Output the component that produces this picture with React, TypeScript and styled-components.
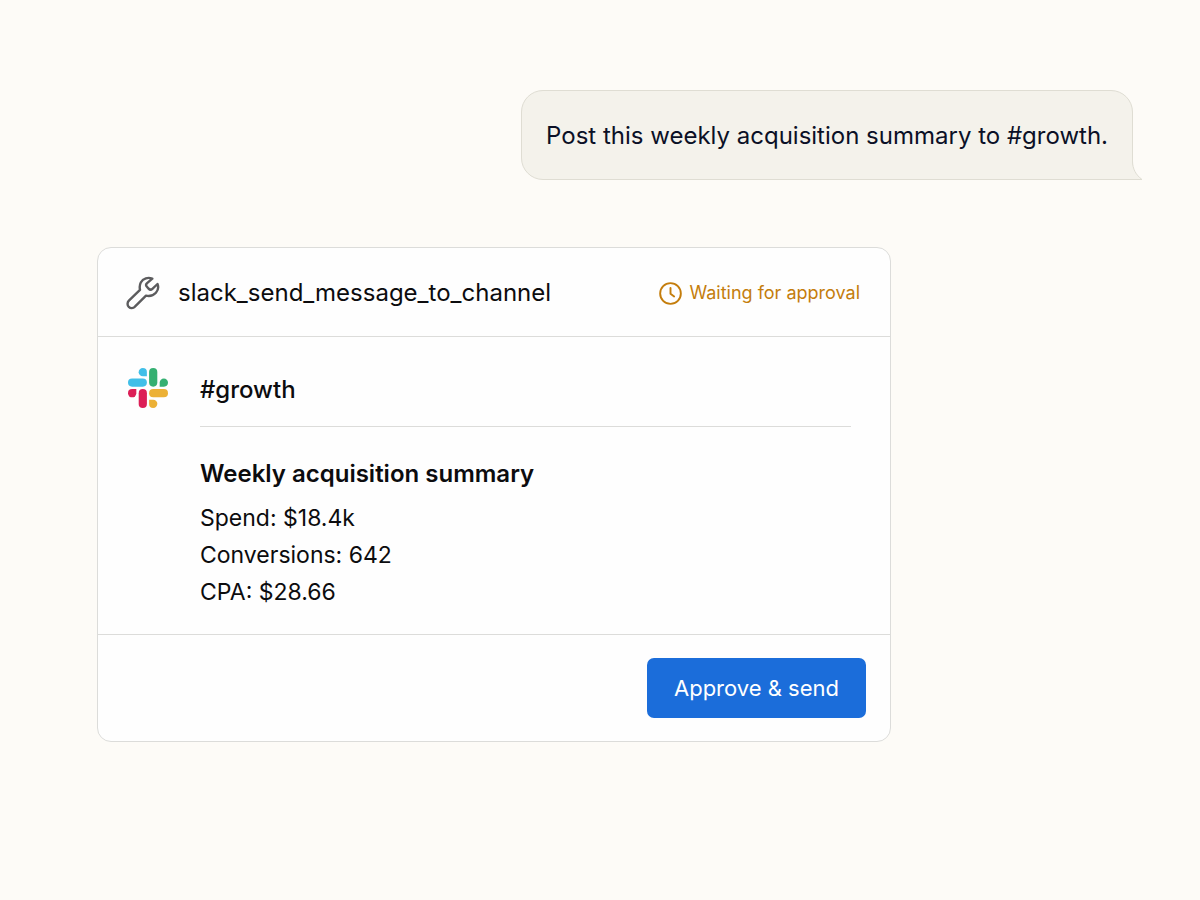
import React from 'react';
import styled, { createGlobalStyle } from 'styled-components';

const GlobalStyle = createGlobalStyle`
  *, *::before, *::after { box-sizing: border-box; }
  body {
    margin: 0;
    background: #fdfbf7;
    color: #0c0c0e;
    font-family: Inter, "Liberation Sans", sans-serif;
    font-size: 24px;
    line-height: 36px;
  }
  h1, h2, p, ul { margin: 0; padding: 0; font-size: inherit; }
`;

const Conversation = styled.main`
  display: flex;
  flex-direction: column;
  gap: 67px;
  min-height: 100vh;
  padding: 90px 67px 90px 97px;
`;

const UserMessage = styled.div`
  position: relative;
  align-self: flex-end;
  padding: 27px 24px 25px;
  border: 1px solid #dfddd3;
  border-radius: 22px 22px 0 22px;
  background: #f4f2eb;
  color: #0b1026;
`;

const BubbleTail = styled.svg`
  position: absolute;
  right: -11px;
  bottom: -1px;
`;

const Card = styled.section`
  width: 100%;
  max-width: 794px;
  border: 1px solid #dcdcda;
  border-radius: 14px;
  background: #fefefe;
`;

const CardHeader = styled.header`
  display: flex;
  align-items: center;
  justify-content: space-between;
  gap: 16px;
  padding: 27px 30px 25px 28px;
  border-bottom: 1px solid #dcdcda;
`;

const ToolName = styled.h1`
  display: flex;
  align-items: center;
  gap: 18px;
  font-weight: 400;
`;

const Status = styled.p`
  display: flex;
  align-items: center;
  gap: 7px;
  color: #c47d0c;
  font-size: 18px;
`;

const CardBody = styled.div`
  display: flex;
  gap: 32px;
  padding: 31px 39px 23px 30px;
`;

const Preview = styled.div`
  flex: 1;
`;

const Channel = styled.h2`
  padding: 4px 0 18px;
  border-bottom: 1px solid #dcdcda;
  font-weight: 500;
`;

const SummaryTitle = styled.h2`
  padding: 29px 0 8px;
  font-weight: 600;
`;

const Metrics = styled.ul`
  list-style: none;
  font-size: 23px;
  line-height: 37px;
`;

const CardFooter = styled.footer`
  display: flex;
  justify-content: flex-end;
  padding: 23px 24px;
  border-top: 1px solid #dcdcda;
`;

const ApproveButton = styled.button`
  height: 60px;
  padding: 0 27px;
  border: 0;
  border-radius: 7px;
  background: #1b6dda;
  color: #fff;
  font: inherit;
  font-size: 22px;
  cursor: pointer;
`;

const WrenchIcon = () => (
  <svg width="34" height="34" viewBox="0 0 34 34" fill="none" stroke="#5c5c5e" strokeWidth="2.4" strokeLinejoin="round" strokeLinecap="round" aria-hidden="true">
    <path d="M26.3 2.6C22.1 1 17.1 2.2 14.8 6.5C13.6 8.8 13.5 11.4 14 13.8L2.9 24.6C1.2 26.4 1.1 29.3 2.8 30.9C4.5 32.6 7.2 32.5 8.9 30.7L20 19.7C23.5 20.5 27.4 19.5 29.9 16.8C32.2 14.1 32.8 11.1 31.5 8L26.4 12.8C25.3 13.8 23.6 13.7 22.6 12.6L20.9 10.8C19.9 9.7 20 8.1 21.1 7.1Z" />
  </svg>
);

const ClockIcon = () => (
  <svg width="23" height="23" viewBox="0 0 24 24" fill="none" stroke="currentColor" strokeWidth="2" strokeLinecap="round" strokeLinejoin="round" aria-hidden="true">
    <circle cx="12" cy="12" r="10.8" />
    <path d="M12 6.2V12.3L15.8 15.1" />
  </svg>
);

const SlackLogo = () => (
  <svg width="40" height="40" viewBox="0 0 40 40" role="img" aria-label="Slack">
    <g fill="#41bfe8">
      <path d="M14.8 0A4.1 4.1 0 1 0 14.8 8.3H18.9V4.1A4.1 4.1 0 0 0 14.8 0Z" />
      <rect x="0" y="10.5" width="18.9" height="8.2" rx="4.1" />
    </g>
    <g fill="#35b072">
      <rect x="21.1" y="0" width="8.2" height="18.7" rx="4.1" />
      <path d="M40 14.6A4.1 4.1 0 1 0 31.7 14.6V18.7H35.9A4.1 4.1 0 0 0 40 14.6Z" />
    </g>
    <g fill="#ecb136">
      <rect x="21.1" y="21.1" width="18.9" height="8.2" rx="4.1" />
      <path d="M25.2 40A4.1 4.1 0 1 0 25.2 31.7H21.1V35.9A4.1 4.1 0 0 0 25.2 40Z" />
    </g>
    <g fill="#dc1f57">
      <rect x="10.7" y="21.1" width="8.2" height="18.9" rx="4.1" />
      <path d="M0 25.2A4.1 4.1 0 1 0 8.3 25.2V21.1H4.1A4.1 4.1 0 0 0 0 25.2Z" />
    </g>
  </svg>
);

const metrics = ['Spend: $18.4k', 'Conversions: 642', 'CPA: $28.66'];

export default function App() {
  return (
    <>
      <GlobalStyle />
      <Conversation>
        <UserMessage>
          <p>Post this weekly acquisition summary to #growth.</p>
          <BubbleTail width="12" height="26" viewBox="0 0 12 26" aria-hidden="true">
            <path d="M0 0H1.5V7C1.5 15 5 21 11 25.5H0Z" fill="#f4f2eb" />
            <path d="M1.5 0V7C1.5 15 5 21 11 25.5H0" fill="none" stroke="#dfddd3" />
          </BubbleTail>
        </UserMessage>
        <Card>
          <CardHeader>
            <ToolName>
              <WrenchIcon />
              slack_send_message_to_channel
            </ToolName>
            <Status>
              <ClockIcon />
              Waiting for approval
            </Status>
          </CardHeader>
          <CardBody>
            <SlackLogo />
            <Preview>
              <Channel>#growth</Channel>
              <SummaryTitle>Weekly acquisition summary</SummaryTitle>
              <Metrics>
                {metrics.map((metric) => (
                  <li key={metric}>{metric}</li>
                ))}
              </Metrics>
            </Preview>
          </CardBody>
          <CardFooter>
            <ApproveButton type="button">Approve &amp; send</ApproveButton>
          </CardFooter>
        </Card>
      </Conversation>
    </>
  );
}
